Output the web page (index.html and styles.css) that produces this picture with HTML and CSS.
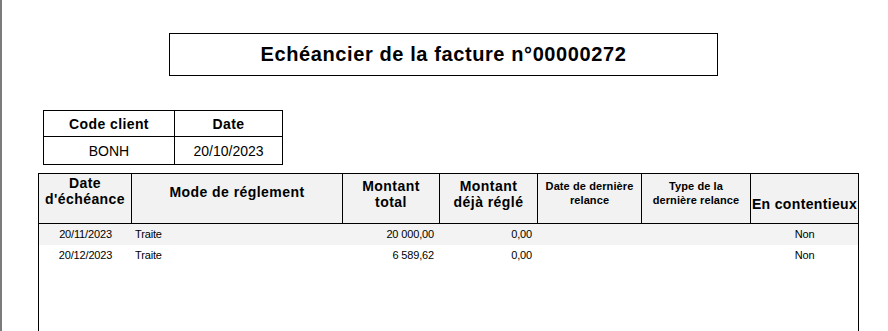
FILE: index.html
```html
<!DOCTYPE html>
<html lang="fr">
<head>
<meta charset="utf-8">
<title>Echéancier de la facture</title>
<link rel="stylesheet" href="styles.css">
</head>
<body>
<div class="page">
  <div class="title-box">Echéancier de la facture n°00000272</div>

  <div class="client">
    <div class="c-head c-first">Code client</div>
    <div class="c-head">Date</div>
    <div class="c-val c-first">BONH</div>
    <div class="c-val">20/10/2023</div>
  </div>

  <div class="sched">
    <div class="s-head">
      <div class="h h1">Date<br>d'échéance</div>
      <div class="h h2">Mode de réglement</div>
      <div class="h h3">Montant<br>total</div>
      <div class="h h3">Montant<br>déjà réglé</div>
      <div class="h hs">Date de dernière<br>relance</div>
      <div class="h hs">Type de la<br>dernière relance</div>
      <div class="h h7">En contentieux</div>
    </div>
    <div class="s-body">
      <div class="row alt">
        <div class="d center">20/11/2023</div>
        <div class="d left">Traite</div>
        <div class="d right">20 000,00</div>
        <div class="d right">0,00</div>
        <div class="d"></div>
        <div class="d"></div>
        <div class="d center">Non</div>
      </div>
      <div class="row">
        <div class="d center">20/12/2023</div>
        <div class="d left">Traite</div>
        <div class="d right">6 589,62</div>
        <div class="d right">0,00</div>
        <div class="d"></div>
        <div class="d"></div>
        <div class="d center">Non</div>
      </div>
    </div>
  </div>
</div>
</body>
</html>
```
FILE: styles.css
```css
* { box-sizing: border-box; }

html, body {
  margin: 0;
  padding: 0;
  background: #fff;
  overflow: hidden;
}

body {
  font-family: "Liberation Sans", Arial, sans-serif;
  color: #000;
}

.page {
  border-left: 2px solid #7b7b7b;
  min-height: 100vh;
  padding-top: 33px;
}

.title-box {
  margin-left: 167px;
  width: 549px;
  height: 43px;
  border: 1px solid #000;
  display: flex;
  align-items: center;
  justify-content: center;
  font-weight: bold;
  font-size: 20px;
  letter-spacing: 0.6px;
  padding-bottom: 1px;
}

.client {
  margin-top: 34px;
  margin-left: 41px;
  width: 240px;
  border: 1px solid #000;
  display: grid;
  grid-template-columns: 131px 107px;
  grid-template-rows: 26px 27px;
}

.c-head, .c-val {
  display: flex;
  align-items: center;
  justify-content: center;
  font-size: 14px;
}

.c-head {
  font-weight: bold;
  letter-spacing: 0.4px;
  border-bottom: 1px solid #000;
}

.c-first { border-right: 1px solid #000; }

.sched {
  margin-top: 8px;
  margin-left: 36px;
  width: 821px;
  border: 1px solid #000;
  border-bottom: none;
}

.s-head, .row {
  display: grid;
  grid-template-columns: 93px 211px 97px 98px 104px 109px 107px;
}

.s-head {
  height: 50px;
  background: #f2f2f2;
  border-bottom: 1px solid #000;
}

.h {
  border-right: 1px solid #000;
  text-align: center;
  font-weight: bold;
  font-size: 14px;
  line-height: 16px;
  letter-spacing: 0.45px;
}

.h1 { padding-top: 1px; }
.h2 { padding-top: 10px; }
.h3 { padding-top: 4px; }
.hs {
  padding-top: 5px;
  font-size: 11px;
  line-height: 14px;
  letter-spacing: 0.1px;
}
.h7 {
  border-right: none;
  padding-top: 22px;
  letter-spacing: 0.35px;
  white-space: nowrap;
}

.s-body {
  min-height: 140px;
}

.row {
  height: 21px;
  font-size: 11px;
  line-height: 21px;
  letter-spacing: -0.15px;
}

.row.alt { background: #f3f3f3; }

.d { white-space: nowrap; }
.center { text-align: center; }
.left { text-align: left; padding-left: 3px; }
.right { text-align: right; padding-right: 6px; }
```
